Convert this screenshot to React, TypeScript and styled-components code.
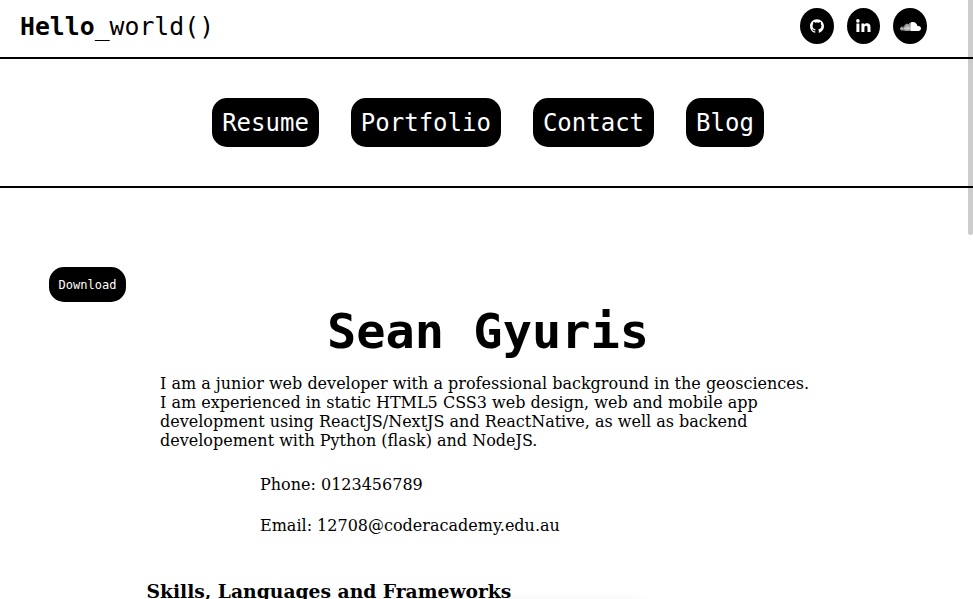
import React from "react";
import styled, { createGlobalStyle } from "styled-components";
import { FaSoundcloud } from "react-icons/fa";
import { ImGithub } from "react-icons/im";

const GlobalStyle = createGlobalStyle`
  *, *::before, *::after { box-sizing: border-box; }
  html, body { margin: 0; height: 599px; overflow: hidden; background: #fff; }
  body { color: #000; font: 16px/19px "DejaVu Serif", serif; }
`;

const mono = `"DejaVu Sans Mono", monospace`;

const Page = styled.div`
  height: 599px;
  overflow: hidden;
`;

const Header = styled.header`
  display: flex;
  justify-content: space-between;
  height: 59px;
  padding: 8px 46px 0 20px;
  border-bottom: 2px solid #000;
`;

const Brand = styled.div`
  padding-top: 4px;
  font: 24.8px/29px ${mono};
`;

const Socials = styled.div`
  display: flex;
  gap: 13px;
`;

const SocialLink = styled.a<{ $width?: number }>`
  display: flex;
  align-items: center;
  justify-content: center;
  width: ${({ $width = 34 }) => $width}px;
  height: 36px;
  border-radius: 50%;
  background: #000;
  color: #fff;
`;

const Nav = styled.nav`
  display: flex;
  justify-content: center;
  gap: 32px;
  height: 129px;
  padding: 39px 0 0 3px;
  border-bottom: 2px solid #000;
`;

const NavButton = styled.a`
  height: 49px;
  padding: 11px 10px 9px;
  border-radius: 15px;
  background: #000;
  color: #fff;
  font: 24px/29px ${mono};
`;

const Main = styled.main`
  display: flex;
  flex-direction: column;
  padding-top: 79px;
`;

const Download = styled.button`
  width: 77px;
  height: 35px;
  margin-left: 49px;
  padding: 2px 0 0;
  border: 0;
  border-radius: 15px;
  background: #000;
  color: #fff;
  font: 12px/15px ${mono};
`;

const Name = styled.h1`
  margin: 1px 0 0 3px;
  text-align: center;
  font: bold 5vw/56px ${mono};
`;

const Bio = styled.p`
  width: 655px;
  margin: 15px 0 0 160px;
`;

const Contact = styled.div`
  display: grid;
  gap: 22px;
  margin: 25px 0 0 260px;
`;

const SectionTitle = styled.h3`
  margin: 45px 0 0 146.5px;
  font-size: 18.72px;
  line-height: 22px;
`;

const CardShade = styled.div`
  position: absolute;
  bottom: 0;
  left: 340px;
  width: 310px;
  height: 7px;
  background: linear-gradient(to bottom, rgba(0, 0, 0, 0), rgba(0, 0, 0, 0.022));
  mask-image: linear-gradient(to right, transparent, #000 30px, #000 285px, transparent);
`;

const ScrollThumb = styled.div`
  position: absolute;
  top: 0;
  right: 0;
  width: 5px;
  height: 235px;
  border-radius: 0 0 3px 3px;
  background: rgba(0, 0, 0, 0.2);
`;

const navItems = ["Resume", "Portfolio", "Contact", "Blog"];

const LinkedInIcon = () => (
  <svg width="15" height="14" viewBox="0 0 15 14" fill="currentColor">
    <circle cx="1.9" cy="1.9" r="1.8" />
    <path d="M.4 4.5h3V13h-3zM5.4 4.5h2.9v1.2c.6-.9 1.5-1.4 2.8-1.4 2.3 0 3.4 1.5 3.4 4V13h-3V8.8c0-1.3-.3-2.1-1.4-2.1-1.2 0-1.7.8-1.7 2.1V13h-3z" />
  </svg>
);

export default function App() {
  return (
    <Page>
      <GlobalStyle />
      <Header>
        <Brand><b>Hello</b>_world()</Brand>
        <Socials>
          <SocialLink aria-label="GitHub"><ImGithub size={14} /></SocialLink>
          <SocialLink aria-label="LinkedIn" $width={33}><LinkedInIcon /></SocialLink>
          <SocialLink aria-label="SoundCloud"><FaSoundcloud size={21} /></SocialLink>
        </Socials>
      </Header>
      <Nav>
        {navItems.map((item) => <NavButton key={item}>{item}</NavButton>)}
      </Nav>
      <Main>
        <Download>Download</Download>
        <Name>Sean Gyuris</Name>
        <Bio>
          I am a junior web developer with a professional background in the geosciences.
          I am experienced in static HTML5 CSS3 web design, web and mobile app
          development using ReactJS/NextJS and ReactNative, as well as backend
          developement with Python (flask) and NodeJS.
        </Bio>
        <Contact>
          <span>Phone: 0123456789</span>
          <span>Email: 12708@coderacademy.edu.au</span>
        </Contact>
        <SectionTitle>Skills, Languages and Frameworks</SectionTitle>
      </Main>
      <CardShade />
      <ScrollThumb />
    </Page>
  );
}
